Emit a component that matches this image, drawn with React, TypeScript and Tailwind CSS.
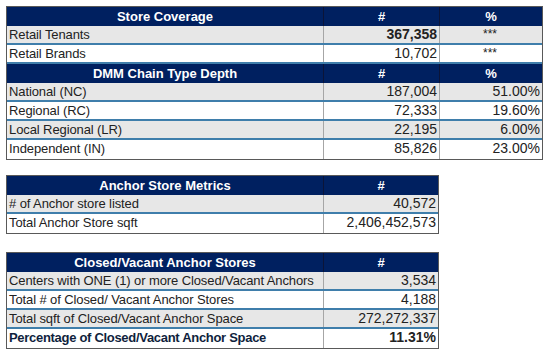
import React from "react"

type Row = { label: string; values: string[]; bold?: boolean; boldLabel?: boolean }

type Section = { title: string; heads: string[]; rows: Row[] }

function Table({ cols, sections }: { cols: string; sections: Section[] }) {
  return (
    <div className="border border-[#595959] bg-white">
      {sections.map((sec, si) => (
        <div key={si}>
          <div className={`grid ${cols} h-[19px] bg-[#002060] text-white font-bold text-[13px] leading-[19px]`}>
            <div className="text-center">{sec.title}</div>
            {sec.heads.map((h, i) => (
              <div key={i} className="text-center border-l border-[#0b1438]">
                {h}
              </div>
            ))}
          </div>
          {sec.rows.map((r, i) => {
            const last = si === sections.length - 1 && i === sec.rows.length - 1
            return (
              <div
                key={i}
                className={`grid ${cols} h-[19px] ${last ? "" : "border-b-2 border-[#3f7eab]"} ${
                  i % 2 === 0 ? "bg-[#e7e7e7]" : "bg-white"
                } text-[#222] leading-[17px]`}
              >
                <div
                  className={`pl-[2px] whitespace-nowrap text-[13px] tracking-[-0.1px] ${
                    r.boldLabel ? "font-bold text-[#0f1f3d] tracking-[-0.3px]" : ""
                  }`}
                >
                  {r.label}
                </div>
                {r.values.map((v, j) => (
                  <div
                    key={j}
                    className={`border-l border-[#a6a6a6] pr-[2px] ${
                      v === "***" ? "text-center text-[12px]" : "text-right text-[14px]"
                    } ${r.bold && j === 0 ? "font-bold" : ""}`}
                  >
                    {v}
                  </div>
                ))}
              </div>
            )
          })}
        </div>
      ))}
    </div>
  )
}

export default function App() {
  return (
    <div className="w-[550px] h-[350px] bg-white pl-[6px] pt-[6px] font-['Liberation_Sans',Arial,sans-serif]">
      <div className="w-[537px]">
        <Table
          cols="grid-cols-[316px_116px_1fr]"
          sections={[
            {
              title: "Store Coverage",
              heads: ["#", "%"],
              rows: [
                { label: "Retail Tenants", values: ["367,358", "***"], bold: true },
                { label: "Retail Brands", values: ["10,702", "***"] },
              ],
            },
            {
              title: "DMM Chain Type Depth",
              heads: ["#", "%"],
              rows: [
                { label: "National (NC)", values: ["187,004", "51.00%"] },
                { label: "Regional (RC)", values: ["72,333", "19.60%"] },
                { label: "Local Regional (LR)", values: ["22,195", "6.00%"] },
                { label: "Independent (IN)", values: ["85,826", "23.00%"] },
              ],
            },
          ]}
        />
      </div>

      <div className="w-[433px] mt-[15px]">
        <Table
          cols="grid-cols-[316px_1fr]"
          sections={[
            {
              title: "Anchor Store Metrics",
              heads: ["#"],
              rows: [
                { label: "# of Anchor store listed", values: ["40,572"] },
                { label: "Total Anchor Store sqft", values: ["2,406,452,573"] },
              ],
            },
          ]}
        />
      </div>

      <div className="w-[433px] mt-[18px]">
        <Table
          cols="grid-cols-[316px_1fr]"
          sections={[
            {
              title: "Closed/Vacant Anchor Stores",
              heads: ["#"],
              rows: [
                { label: "Centers with ONE (1) or more Closed/Vacant Anchors", values: ["3,534"] },
                { label: "Total # of Closed/ Vacant Anchor Stores", values: ["4,188"] },
                { label: "Total sqft of Closed/Vacant Anchor Space", values: ["272,272,337"] },
                {
                  label: "Percentage of Closed/Vacant Anchor Space",
                  values: ["11.31%"],
                  bold: true,
                  boldLabel: true,
                },
              ],
            },
          ]}
        />
      </div>
    </div>
  )
}
